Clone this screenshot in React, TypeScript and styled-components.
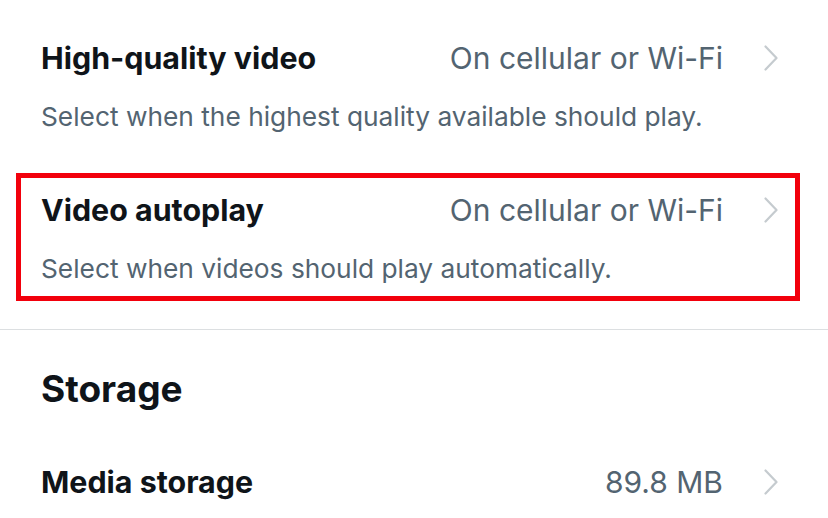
import React from 'react';
import styled, { createGlobalStyle } from 'styled-components';

const Global = createGlobalStyle`
  html, body {
    margin: 0;
    padding: 0;
    background: #ffffff;
  }
  body {
    font-family: Inter, 'Liberation Sans', Arial, sans-serif;
    color: #0f1419;
    -webkit-font-smoothing: antialiased;
  }
`;

const Page = styled.div`
  width: 828px;
  height: 518px;
  overflow: hidden;
  padding-top: 21px;
  box-sizing: border-box;
`;

const List = styled.div`
  display: flex;
  flex-direction: column;
  gap: 24px;
`;

const Item = styled.div<{ highlighted?: boolean }>`
  margin: 0 28px 0 16px;
  padding: 12px 17px 10px 20px;
  border: 5px solid ${(p) => (p.highlighted ? '#f2000c' : 'transparent')};
  display: flex;
  flex-direction: column;
  gap: 22px;
`;

const Row = styled.div`
  display: flex;
  align-items: center;
  height: 40px;
`;

const Title = styled.div`
  flex: 1;
  font-size: 30.4px;
  font-weight: 700;
  line-height: 40px;
  color: #0f1419;
`;

const Value = styled.div`
  font-size: 30px;
  line-height: 40px;
  color: #536471;
`;

const Description = styled.div`
  font-size: 26.3px;
  line-height: 34px;
  color: #536471;
`;

const ChevronWrap = styled.span`
  display: flex;
  margin-left: 41px;
`;

const Divider = styled.div`
  height: 1px;
  background: #dcdfe1;
  margin-top: 28px;
`;

const SectionTitle = styled.h2`
  margin: 35px 0 32px 41px;
  font-size: 37px;
  line-height: 48px;
  font-weight: 700;
  color: #0f1419;
`;

const Chevron = () => (
  <ChevronWrap>
    <svg width="14" height="26" viewBox="0 0 14 26" fill="none">
      <polyline
        points="1.5,1.5 12.5,13 1.5,24.5"
        stroke="#c5cbcf"
        strokeWidth="2.2"
        strokeLinecap="round"
        strokeLinejoin="round"
      />
    </svg>
  </ChevronWrap>
);

type SettingProps = {
  title: string;
  value: string;
  description?: string;
  highlighted?: boolean;
};

const Setting = (props: SettingProps) => (
  <Item highlighted={props.highlighted}>
    <Row>
      <Title>{props.title}</Title>
      <Value>{props.value}</Value>
      <Chevron />
    </Row>
    {props.description && <Description>{props.description}</Description>}
  </Item>
);

export default function App() {
  return (
    <Page>
      <Global />
      <List>
        <Setting
          title="High-quality video"
          value="On cellular or Wi-Fi"
          description="Select when the highest quality available should play."
        />
        <Setting
          highlighted
          title="Video autoplay"
          value="On cellular or Wi-Fi"
          description="Select when videos should play automatically."
        />
      </List>
      <Divider />
      <SectionTitle>Storage</SectionTitle>
      <Setting title="Media storage" value="89.8 MB" />
    </Page>
  );
}
